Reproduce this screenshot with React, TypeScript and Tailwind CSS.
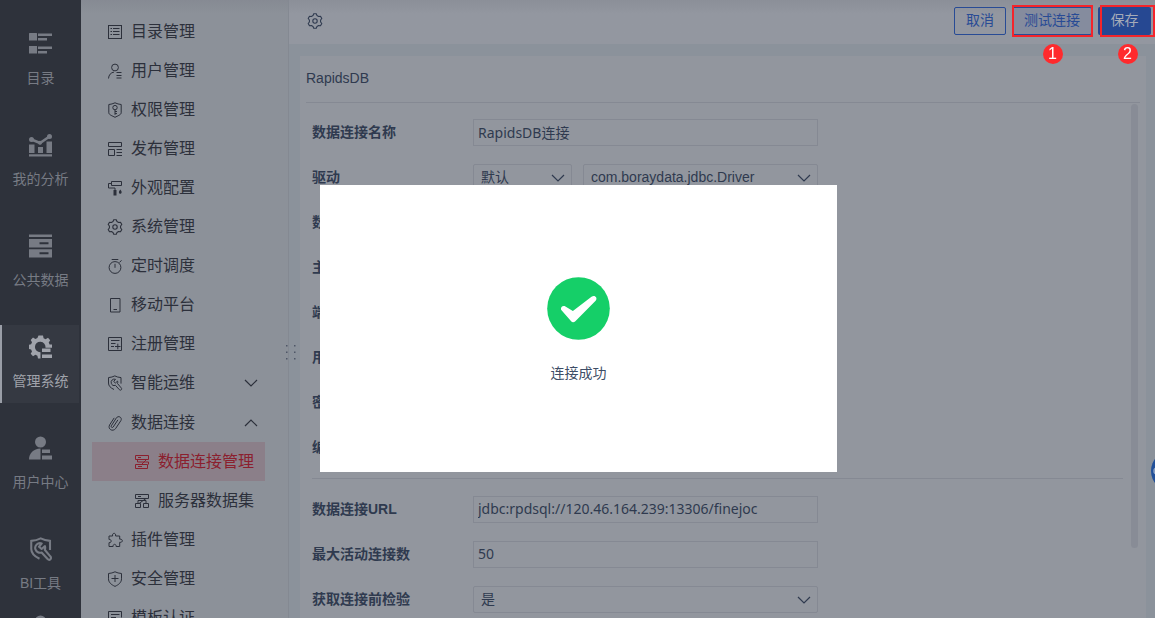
import React, { useState } from "react";

type IconProps = { className?: string };

const line = {
  fill: "none",
  stroke: "currentColor",
  strokeWidth: 1,
} as const;

function Svg({ className = "h-4 w-4", children }: { className?: string; children: React.ReactNode }) {
  return (
    <svg viewBox="0 0 16 16" className={className} aria-hidden="true" {...line}>
      {children}
    </svg>
  );
}

/* Menu icons */
const ListIcon = () => (
  <Svg>
    <rect x="1.5" y="1.5" width="13" height="13" />
    <path d="M3.500 4.500h1.500M6 4.500h6.500M3.500 7.500h1.500M6 7.500h6.500M3.500 10.500h1.500M6 10.500h6.500" />
  </Svg>
);
const UserIcon = () => (
  <Svg>
    <circle cx="8" cy="4.500" r="3.400" />
    <path d="M1.500 15.500c.2-3.600 2.400-6 5.500-6.400M9.500 9.500h5M9.500 12.500h5M9.500 15h5" />
  </Svg>
);
const PermissionIcon = () => (
  <Svg>
    <path d="M8 .8c2 1 4 1.500 6.200 1.700v8.300c0 1.900-3.500 3.100-6.200 4.500-2.700-1.400-6.200-2.600-6.200-4.500V2.500C4 2.300 6 1.800 8 .8Z" />
    <circle cx="8" cy="5.600" r="2.200" />
    <path d="M8 7.800v5M8 9.500h2M8 11.600h2" />
  </Svg>
);
const PublishIcon = () => (
  <Svg>
    <path d="M1.500 1.500h13v4h-13zM1.500 8.500h6v6h-6zM9.500 8.500h5.500M9.500 11.500h5.500M9.500 14.500h5.500" />
  </Svg>
);
const AppearanceIcon = () => (
  <Svg>
    <path d="M4.500 1.500h10v4h-10zM4.500 3.500h-3v4.500h6.500v2" />
    <path d="M6.500 10h3v5.500h-3zM13.300 9.500c2.300 2.600 1.300 4.300 0 4.300s-2.300-1.700 0-4.300Z" fill="currentColor" stroke="none" />
  </Svg>
);
const GearIcon = () => (
  <Svg>
    <path
      strokeLinejoin="round"
      strokeWidth="1.100"
      d="M6 2.600 6.700.8h2.600l.7 1.800 1.600.9 1.900-.3 1.300 2.300-1.200 1.500v2l1.200 1.500-1.300 2.300-1.900-.3-1.600.9-.7 1.800H6.700L6 13.400l-1.600-.9-1.900.3-1.300-2.300L2.400 9V7L1.200 5.500l1.300-2.300 1.900.3Z"
    />
    <circle cx="8" cy="8" r="2.200" strokeWidth="1.100" />
  </Svg>
);
const TimerIcon = () => (
  <Svg>
    <circle cx="8" cy="9.500" r="5.900" />
    <path d="M8 5.800v4M4.700 1.500h6.600M12.500 4.500l2-2.200" />
  </Svg>
);
const MobileIcon = () => (
  <Svg>
    <path d="M3.500 1.500h9.500v13.500H3.500zM6.500 12.500h3.500" />
  </Svg>
);
const RegisterIcon = () => (
  <Svg>
    <path d="M1.500 1.500h13v13h-13zM4 4.500h8.500M4 7.500h4.500M4 10.500h3M8 10.500h5.500M10.800 7.700v5.600" />
  </Svg>
);
const OpsIcon = ({ className }: IconProps) => (
  <Svg className={className}>
    <path d="M7 14.500C3.500 12.800 1.500 11 1.500 8V2.600C4 2.400 6 1.800 7.800.9c1.700.9 3.700 1.500 6.200 1.700v6" />
    <path
      strokeLinejoin="round"
      d="M8.500 4.300a3.200 3.200 0 0 0-4.200 4 3.200 3.200 0 0 0 4.100 2l4 4.400c.6.600 1.400.6 1.900.1s.5-1.300-.1-1.900L10.500 8.500a3.200 3.200 0 0 0 .1-2.400L8.400 8 6.700 6.500Z"
    />
  </Svg>
);
const ClipIcon = () => (
  <Svg>
    <path
      strokeLinecap="round"
      d="M10.700 5.200 6.200 12c-.9 1.200-2.600.1-1.900-1.200l5-7.800c1.900-2.900 6.300-.7 4.600 2.600l-5.300 8C5.700 17.200 .4 14.200 2.600 9.900L7 3.200"
    />
  </Svg>
);
const ConnectionIcon = () => (
  <Svg>
    <path d="M1.500 1.500h13v4h-13zM4 3.500h3M12.500 5.500l-5 5M3.500 8h8M1.500 10.500h12v4h-12zM4 12.500h4M3.500 5.500V8M14.500 8v2.500M11.500 8h3" />
  </Svg>
);
const DatasetIcon = () => (
  <Svg>
    <path d="M1.500 1.500h13v4h-13zM4 3.500h3M12 5.500 5 10.500M4 7.500h8M1.500 10.500h5v4h-5zM9.500 10.500h5v4h-5zM4 7.500v3M12 7.500v3" />
  </Svg>
);
const PluginIcon = () => (
  <Svg>
    <path
      strokeLinejoin="round"
      d="M2 4h3.600c-.8-3.600 3.700-3.600 3 0h4.100v3.200c3.500-.6 3.500 3.700 0 3.100v4.200H9.100c.4-2.900-3.400-2.900-3 0H2v-3.800c2.900.4 2.900-3.700 0-3.200Z"
    />
  </Svg>
);
const SecurityIcon = () => (
  <Svg>
    <path d="M8 .8c2 1 4 1.500 6.500 1.700v5.300c0 3.500-2.500 5.700-6.500 7.600-4-1.900-6.500-4.100-6.500-7.600V2.500C4 2.300 6 1.800 8 .8ZM4.500 7.500h7M8 4v7" />
  </Svg>
);
const TemplateIcon = () => (
  <Svg>
    <path d="M8 14.500H1.500v-13h13v6M4 4.500h8.500M4 7.500h5M10 11l2 2 3-3.500" />
  </Svg>
);

function Chevron({ up = false }: { up?: boolean }) {
  return (
    <svg viewBox="0 0 14 8" className="h-2 w-3.5" fill="none" stroke="currentColor" strokeWidth="1.200" aria-hidden="true">
      <path d={up ? "M1 7l6-6 6 6" : "M1 1l6 6 6-6"} />
    </svg>
  );
}

/* Rail icons */
function RailSvg({ children }: { children: React.ReactNode }) {
  return (
    <svg viewBox="1 0 24 24" className="h-6 w-6" fill="currentColor" aria-hidden="true">
      {children}
    </svg>
  );
}
const RailCatalog = () => (
  <RailSvg>
    <path d="M1.500 1H8.500Q9 1 9 1.500V8.500H1V1.500ZM10 1.500h14v2.500H10zM10 6h9v2.500h-9zM1 14h8v7.500H1zM10 14.500h14V17H10zM10 19h9v2.500h-9z" />
  </RailSvg>
);
const RailAnalysis = () => (
  <RailSvg>
    <path d="M1 11.500h5.500V20H1zM10 14h5v6h-5zM18.500 8.500H24V20h-5.500zM1 21.200h23v2.300H1z" />
    <path d="M3.500 6.500 12 10l9.500-6.500" fill="none" stroke="currentColor" strokeWidth="2.600" />
    <circle cx="3.500" cy="6.500" r="2.500" />
    <circle cx="21.500" cy="3.500" r="2.500" />
    <circle cx="12" cy="9.800" r="2" />
  </RailSvg>
);
const RailData = () => (
  <RailSvg>
    <path
      fillRule="evenodd"
      d="M1 .5h23V3H1zM1 5h23v8.500H1zM11.500 8.200v2h9v-2zM1 15.200h23v8.300H1zM11.500 18.300v2h9v-2z"
    />
  </RailSvg>
);
const RailSystem = () => (
  <RailSvg>
    <path d="M10.500 .5h4.500l.6 2.800 2 .9 2.400-1.500 2.200 2.500-1.500 2.300.9 2H24v3.200h-6.500A5.300 5.300 0 1 0 12.500 17.300v6.200H10l-.6-2.800-2-.9L5 21.300l-2.300-2.500L4 16.500l-.9-2L1 14V9.800l2.100-.6.9-2-1.300-2.300L5 2.500 7.400 4l2-.9Z" />
    <path d="M14 13.500h8.500V17H14zM14 19.500h10V23H14z" />
  </RailSvg>
);
const RailUser = () => (
  <RailSvg>
    <circle cx="12.500" cy="6" r="5.500" />
    <path d="M12.500 12.500V23.500H1c0-6 4.500-11 11.500-11ZM14 13.500h8V17h-8zM14 19.500h10v4H14z" />
  </RailSvg>
);
const RailTools = () => <OpsIcon className="h-6 w-6 stroke-[1.400]" />;

const railItems = [
  { label: "目录", Icon: RailCatalog },
  { label: "我的分析", Icon: RailAnalysis },
  { label: "公共数据", Icon: RailData },
  { label: "管理系统", Icon: RailSystem, active: true },
  { label: "用户中心", Icon: RailUser },
  { label: "BI工具", Icon: RailTools },
];

function Rail() {
  return (
    <nav className="flex w-[81px] shrink-0 flex-col overflow-hidden bg-[#2e323b] pt-[22px] pr-0.5 text-sm text-[#777b84]">
      <ul className="flex flex-col gap-[23px]">
        {railItems.map(({ label, Icon, active }) => (
          <li key={label}>
            <a
              href="#"
              className={
                active
                  ? "flex h-[78px] flex-col items-center gap-3 border-l-2 border-[#9a9ea7] bg-[#353942] pt-2.5 text-[#a0a3ab]"
                  : "flex h-[78px] flex-col items-center gap-3 border-l-2 border-transparent pt-2.5"
              }
            >
              <Icon />
              <span className="leading-5">{label}</span>
            </a>
          </li>
        ))}
      </ul>
      <a href="#" aria-label="账户" className="mt-2.5 flex shrink-0 justify-center border-l-2 border-transparent">
        <RailUser />
      </a>
    </nav>
  );
}

type MenuEntry = { label: string; Icon: () => React.ReactElement };

const topMenu: MenuEntry[] = [
  { label: "目录管理", Icon: ListIcon },
  { label: "用户管理", Icon: UserIcon },
  { label: "权限管理", Icon: PermissionIcon },
  { label: "发布管理", Icon: PublishIcon },
  { label: "外观配置", Icon: AppearanceIcon },
  { label: "系统管理", Icon: GearIcon },
  { label: "定时调度", Icon: TimerIcon },
  { label: "移动平台", Icon: MobileIcon },
  { label: "注册管理", Icon: RegisterIcon },
];
const bottomMenu: MenuEntry[] = [
  { label: "插件管理", Icon: PluginIcon },
  { label: "安全管理", Icon: SecurityIcon },
  { label: "模板认证", Icon: TemplateIcon },
];

function MenuLink({ label, Icon }: MenuEntry) {
  return (
    <li>
      <a href="#" className="flex h-[39px] items-center gap-2 pl-[15px]">
        <Icon />
        {label}
      </a>
    </li>
  );
}

function Menu() {
  const [open, setOpen] = useState(true);
  return (
    <aside className="w-52 shrink-0 overflow-hidden border-r border-[#848992] bg-[#8c9199] bg-linear-to-b from-[#868a93] to-[#8c9199] to-[14px] pt-3 pr-[23px] pl-[11px] text-base text-[#2c303b]">
      <ul>
        {topMenu.map((m) => (
          <MenuLink key={m.label} {...m} />
        ))}
        <li>
          <button type="button" className="flex h-10 w-full items-center gap-2 pr-[7px] pl-[15px]">
            <OpsIcon />
            <span className="flex-1 text-left">智能运维</span>
            <Chevron />
          </button>
        </li>
        <li>
          <button
            type="button"
            aria-expanded={open}
            onClick={() => setOpen(!open)}
            className="flex h-[39px] w-full items-center gap-2 pr-[7px] pl-[15px]"
          >
            <ClipIcon />
            <span className="flex-1 text-left">数据连接</span>
            <Chevron up={open} />
          </button>
          {open && (
            <ul>
              <li>
                <a href="#" className="flex h-[39px] items-center gap-2 bg-[#8b7f89] pl-[42px] text-[#8b202e]">
                  <ConnectionIcon />
                  数据连接管理
                </a>
              </li>
              <li>
                <a href="#" className="flex h-[39px] items-center gap-2 pl-[42px]">
                  <DatasetIcon />
                  服务器数据集
                </a>
              </li>
            </ul>
          )}
        </li>
        {bottomMenu.map((m) => (
          <MenuLink key={m.label} {...m} />
        ))}
      </ul>
    </aside>
  );
}

/* Red frame over a button, with its step number below */
function StepMark({ n, className }: { n: number; className: string }) {
  return (
    <div className={`pointer-events-none absolute -inset-y-0.5 flex justify-center border-2 border-[#f4252b] ${className}`}>
      <span className="mt-[37px] flex h-5 w-5 shrink-0 items-center justify-center rounded-full bg-[#ff2a2d] text-base leading-5 text-white">
        {n}
      </span>
    </div>
  );
}

function Header() {
  return (
    <header className="relative z-10 flex h-11 shrink-0 items-center justify-between bg-[#9397a0] bg-linear-to-b from-[#8b8f98] to-[#9397a0] to-[14px] pr-1 pb-0.5 pl-[18px] text-[#2f3a4f]">
      <button type="button" aria-label="设置">
        <GearIcon />
      </button>
      <div className="flex gap-1.5 text-sm leading-5">
        <button type="button" className="h-7 w-[52px] rounded-xs border border-[#284b95] pb-0.5 text-[#284b95]">
          取消
        </button>
        <div className="relative">
          <button type="button" className="h-7 w-20 rounded-xs border border-[#284b95] bg-[#858c9e] pb-0.5 text-[#284b95]">
            测试连接
          </button>
          <StepMark n={1} className="-right-px left-0" />
        </div>
        <div className="relative">
          <button type="button" className="h-7 w-[53px] rounded-xs bg-[#264892] pb-0.5 text-[#a5abb8]">
            保存
          </button>
          <StepMark n={2} className="-right-1 left-0.5" />
        </div>
      </div>
    </header>
  );
}

const boxClass =
  "h-[27px] w-full border border-[#858993] bg-transparent pb-0.5 text-sm leading-5 text-[#2f3a4f] outline-none";

function Field({ label, id, children }: { label: string; id: string; children: React.ReactNode }) {
  return (
    <div className="flex items-center">
      <label htmlFor={id} className="w-[161px] shrink-0 pb-0.5 text-sm leading-5 font-bold whitespace-nowrap">
        {label}
      </label>
      <div className="flex w-[345px] gap-[11px]">{children}</div>
    </div>
  );
}

function TextField({ label, id, value = "", type = "text" }: { label: string; id: string; value?: string; type?: string }) {
  return (
    <Field label={label} id={id}>
      <input
        id={id}
        type={type}
        defaultValue={value}
        className={`${boxClass} px-1 font-['Noto_Sans','Noto_Sans_CJK_SC',sans-serif]`}
      />
    </Field>
  );
}

function Select({ id, value, className, label }: { id: string; value: string; className: string; label?: string }) {
  return (
    <div className={`relative ${className}`}>
      <select id={id} aria-label={label} className={`${boxClass} appearance-none rounded-xs pr-7 pl-[7px]`}>
        <option>{value}</option>
      </select>
      <span className="pointer-events-none absolute inset-y-0 right-[7px] flex items-center">
        <Chevron />
      </span>
    </div>
  );
}

function ConnectionForm() {
  return (
    <section className="relative mt-3 mr-[9px] ml-[11px] flex-1 bg-[#92969e] px-1.5 text-[#2f3a4f]">
      <h1 className="border-b border-[#858993] pt-3 pb-3.5 text-sm leading-5">RapidsDB</h1>
      <form className="flex flex-col gap-[17px] pt-4 pr-[17px] pl-1.5">
        <div className="flex flex-col gap-[18px]">
          <TextField id="name" label="数据连接名称" value="RapidsDB连接" />
          <Field id="driver" label="驱动">
            <Select id="driver" value="默认" className="w-[99px]" />
            <Select id="driver-class" label="驱动类" value="com.boraydata.jdbc.Driver" className="flex-1" />
          </Field>
          <TextField id="database" label="数据库名称" />
          <TextField id="host" label="主机" />
          <TextField id="port" label="端口" />
          <TextField id="user" label="用户名" />
          <TextField id="password" label="密码" type="password" />
          <TextField id="encoding" label="编码" />
        </div>
        <hr className="border-[#858993]" />
        <div className="flex flex-col gap-[18px]">
          <TextField id="url" label="数据连接URL" value="jdbc:rpdsql://120.46.164.239:13306/finejoc" />
          <TextField id="max-active" label="最大活动连接数" value="50" />
          <Field id="check" label="获取连接前检验">
            <Select id="check" value="是" className="flex-1" />
          </Field>
        </div>
      </form>
      <span className="absolute top-12 right-2 h-[444px] w-[7px] rounded-full bg-[#888c96]" />
    </section>
  );
}

function SuccessDialog() {
  return (
    <div className="fixed inset-0 flex items-start justify-center pt-[185px] pl-0.5">
      <div role="dialog" aria-label="连接成功" className="flex h-[287px] w-[517px] flex-col items-center bg-white pt-[92px]">
        <svg viewBox="0 0 64 64" className="h-[63px] w-[63px]" aria-hidden="true">
          <circle cx="32" cy="32" r="31.800" fill="#15cf68" />
          <path
            fill="#fff"
            d="M14.300 33.200c-.7-2.700 1.900-4.800 4.400-3.300l7.600 4.700L45.200 20c3.300-2.200 6.700 1 4.200 4.100L28.800 45c-1.600 1.500-3.300 1.300-4.500-.4Z"
          />
        </svg>
        <p className="mt-[23px] text-sm leading-5 text-[#3d4d66]">连接成功</p>
      </div>
    </div>
  );
}

export default function App() {
  return (
    <div className="flex h-screen overflow-hidden bg-[#8b929b] font-['Liberation_Sans','Noto_Sans_CJK_SC',sans-serif]">
      <Rail />
      <Menu />
      <main className="relative flex min-w-0 flex-1 flex-col">
        <Header />
        <ConnectionForm />
        <svg viewBox="0 0 10 16" className="absolute top-[344px] -left-[3px] h-4 w-2.5 text-[#4e5667]" fill="currentColor" aria-hidden="true">
          <path d="M0 1h1.500v1.500H0zM8 1h1.500v1.500H8zM0 7.500h1.500V9H0zM8 7.500h1.500V9H8zM0 14h1.500v1.500H0zM8 14h1.500v1.500H8z" />
        </svg>
      </main>
      <SuccessDialog />
      <button
        type="button"
        aria-label="帮助"
        className="fixed top-[451px] -right-9 flex h-10 w-10 items-center rounded-full bg-[#235199] pl-0.5 text-[#8fa3c4]"
      >
        <svg viewBox="0 0 8 8" className="h-2 w-2" fill="none" stroke="currentColor" strokeWidth="1.500" aria-hidden="true">
          <circle cx="4" cy="4" r="3" />
        </svg>
      </button>
    </div>
  );
}
